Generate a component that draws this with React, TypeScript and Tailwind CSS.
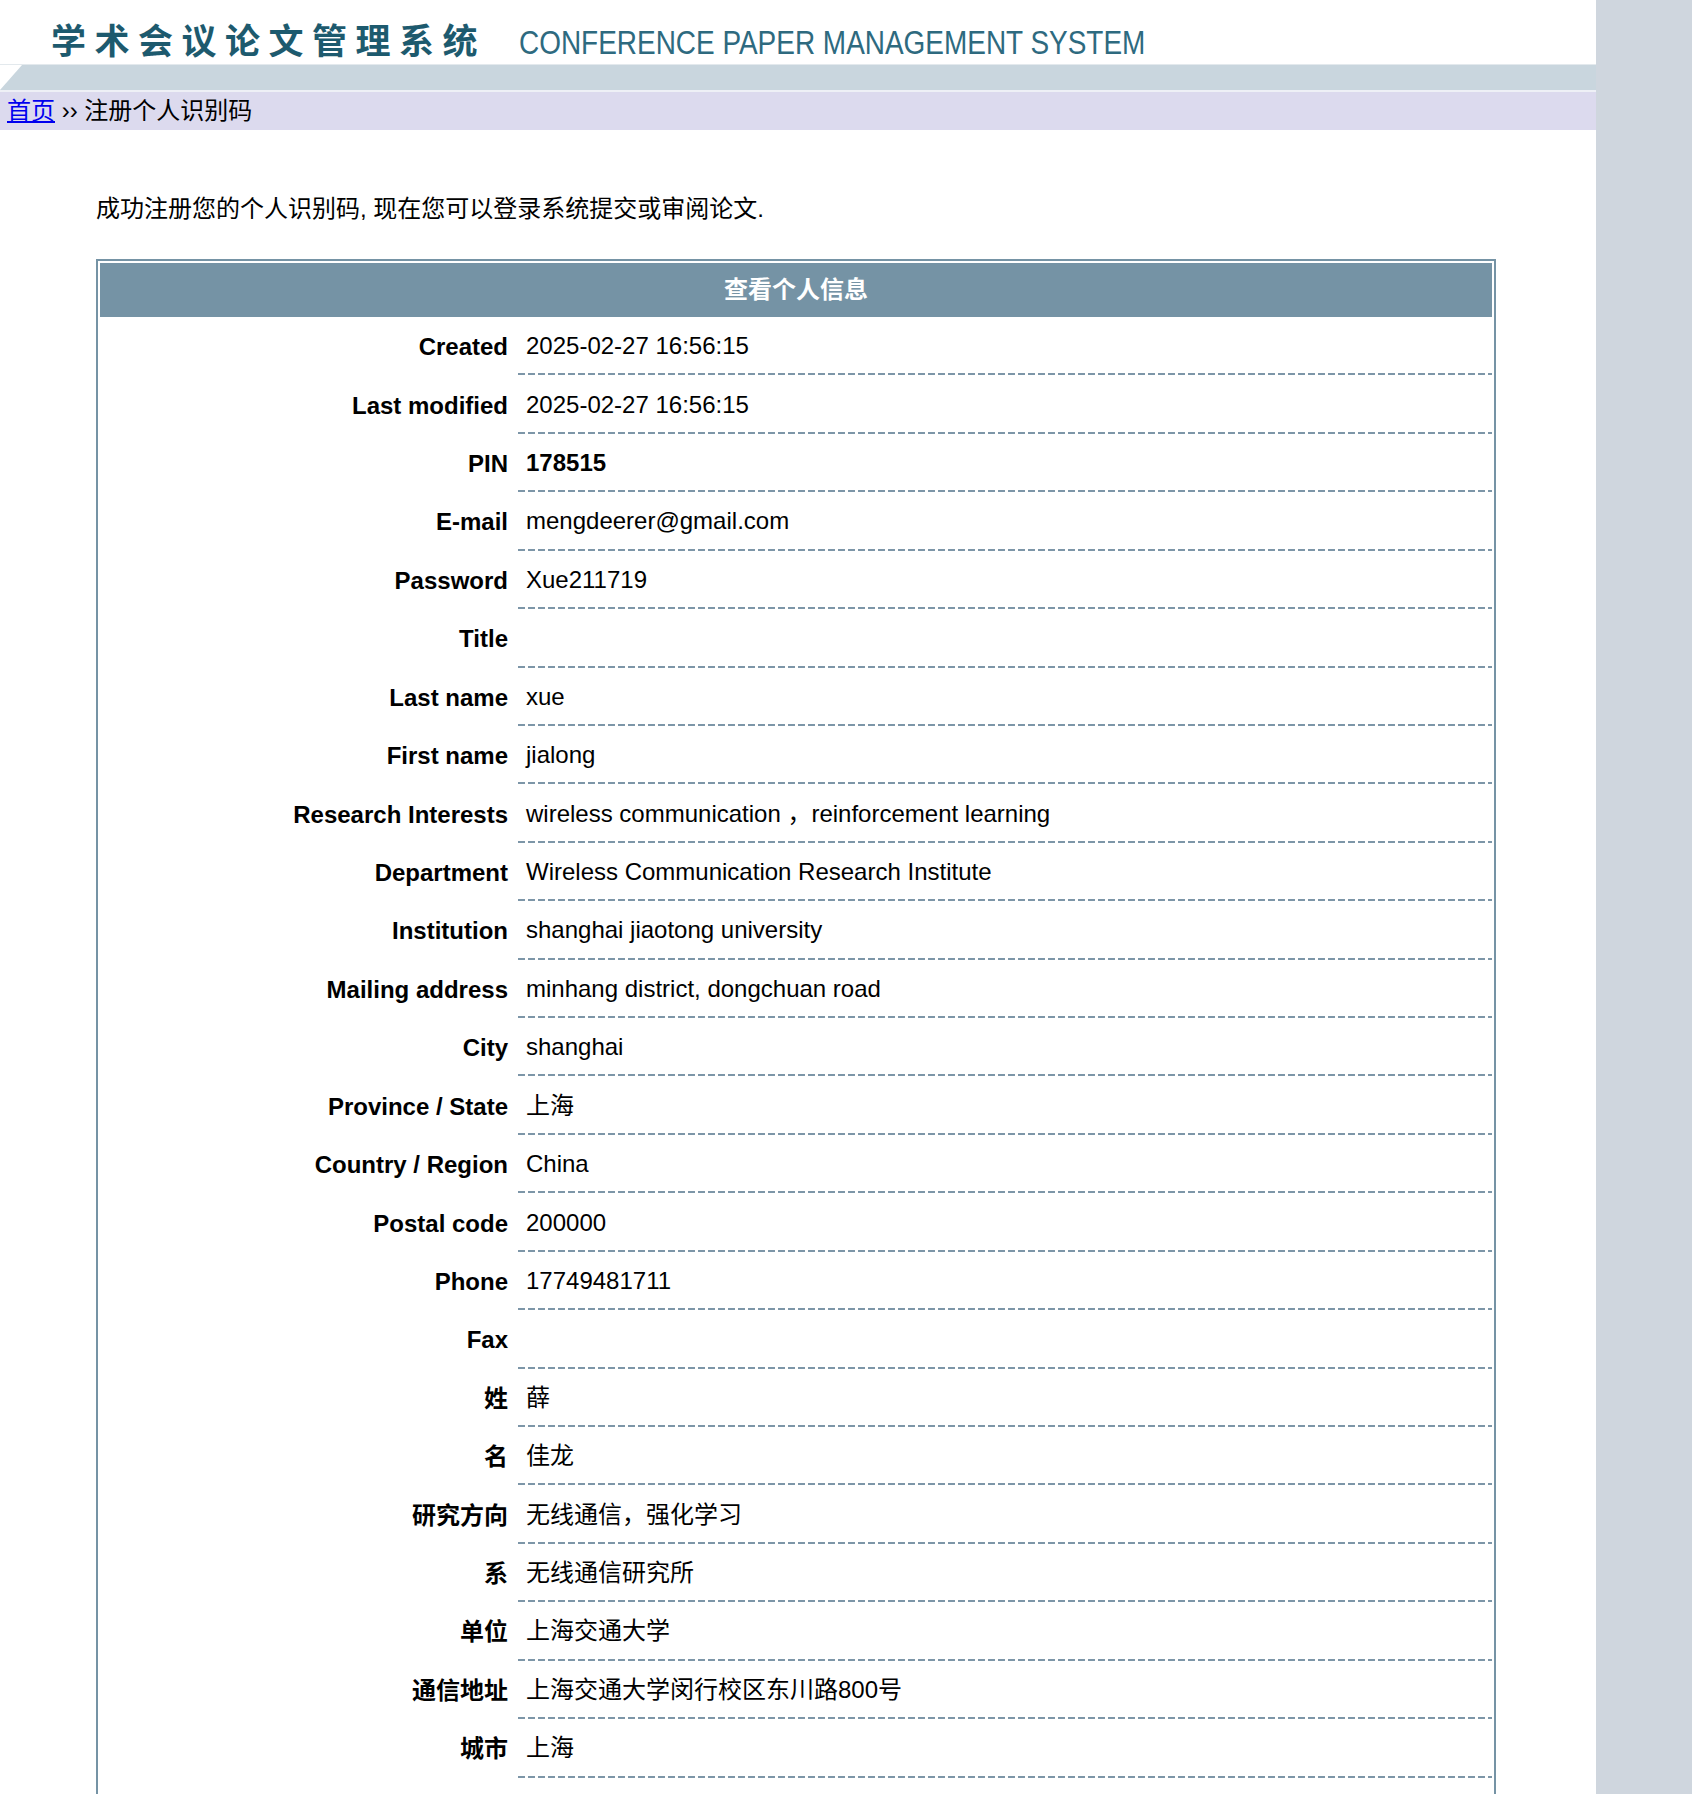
import React from "react";

const rows: { label: string; value: string; bold?: boolean }[] = [
  { label: "Created", value: "2025-02-27 16:56:15" },
  { label: "Last modified", value: "2025-02-27 16:56:15" },
  { label: "PIN", value: "178515", bold: true },
  { label: "E-mail", value: "mengdeerer@gmail.com" },
  { label: "Password", value: "Xue211719" },
  { label: "Title", value: "" },
  { label: "Last name", value: "xue" },
  { label: "First name", value: "jialong" },
  { label: "Research Interests", value: "wireless communication ，reinforcement learning" },
  { label: "Department", value: "Wireless Communication Research Institute" },
  { label: "Institution", value: "shanghai jiaotong university" },
  { label: "Mailing address", value: "minhang district, dongchuan road" },
  { label: "City", value: "shanghai" },
  { label: "Province / State", value: "上海" },
  { label: "Country / Region", value: "China" },
  { label: "Postal code", value: "200000" },
  { label: "Phone", value: "17749481711" },
  { label: "Fax", value: "" },
  { label: "姓", value: "薛" },
  { label: "名", value: "佳龙" },
  { label: "研究方向", value: "无线通信，强化学习" },
  { label: "系", value: "无线通信研究所" },
  { label: "单位", value: "上海交通大学" },
  { label: "通信地址", value: "上海交通大学闵行校区东川路800号" },
  { label: "城市", value: "上海" },
];

function Row({ label, value, bold }: { label: string; value: string; bold?: boolean }) {
  return (
    <div className="flex gap-[2px] h-[56.43px]">
      <div className="w-[416px] shrink-0 flex items-center justify-end pr-[8px] font-bold whitespace-nowrap">
        {label}
      </div>
      <div className="relative flex-1 flex items-center pl-[8px] pb-[2px] whitespace-nowrap">
        <span className={bold ? "font-bold" : ""}>{value}</span>
        <div className="absolute left-0 right-0 bottom-0 h-[2px] bg-[linear-gradient(to_right,#7d96a8_0_7px,transparent_7px_10px)] bg-[length:10px_2px] bg-repeat-x" />
      </div>
    </div>
  );
}

export default function App() {
  return (
    <div className="flex min-h-[1794px] w-full font-['Liberation_Sans','Noto_Sans_CJK_SC',sans-serif] text-[24px] text-black leading-[28px]">
      <div className="w-[1596px] shrink-0 bg-white overflow-hidden">
        {/* header */}
        <div className="h-[64px] flex items-center pt-[14px] pl-[51px] whitespace-nowrap">
          <span className="font-['Noto_Sans_CJK_SC',sans-serif] font-bold text-[35px] leading-[40px] tracking-[8.5px] text-[#1d5a6e]">
            学术会议论文管理系统
          </span>
          <span className="ml-[33px] mt-[6px] inline-block origin-left scale-x-[0.822] font-['Liberation_Sans',sans-serif] text-[34px] leading-[40px] text-[#2e6a7f]">
            CONFERENCE PAPER MANAGEMENT SYSTEM
          </span>
        </div>
        <div className="h-[1px] bg-[#e3e9ed]" />
        <div className="h-[25px] bg-[#c9d6de] [clip-path:polygon(22px_0,100%_0,100%_100%,0_100%)]" />
        <div className="h-[2px] bg-[#eef0f6]" />
        {/* breadcrumb */}
        <div className="h-[38px] bg-[#dcdaee] flex items-center pl-[7px] whitespace-nowrap">
          <a href="#" className="text-[#0000ee] underline">首页</a>
          <span>&nbsp;›› 注册个人识别码</span>
        </div>
        {/* message */}
        <div className="mt-[65px] pl-[96px] whitespace-nowrap">
          成功注册您的个人识别码, 现在您可以登录系统提交或审阅论文.
        </div>
        {/* table */}
        <div className="mt-[36px] ml-[96px] w-[1400px] border-2 border-[#7593a5] p-[2px] flex flex-col gap-[2px]">
          <div className="h-[54px] bg-[#7593a5] flex items-center justify-center text-white font-bold">
            查看个人信息
          </div>
          {rows.map((r) => (
            <Row key={r.label} label={r.label} value={r.value} bold={r.bold} />
          ))}
          <div className="h-[56px]" />
        </div>
      </div>
      <div className="flex-1 bg-[#cfd6de]" />
    </div>
  );
}
